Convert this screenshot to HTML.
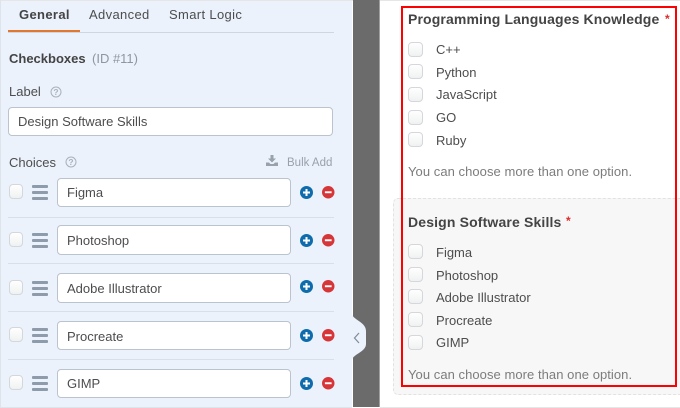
<!DOCTYPE html>
<html><head><meta charset="utf-8">
<style>
html,body{margin:0;padding:0}
body{width:680px;height:408px;position:relative;overflow:hidden;background:#fff;font-family:"Liberation Sans",sans-serif;color:#4a4a4a}
div,span{position:absolute;box-sizing:border-box;white-space:nowrap}
.t{font-size:13px;line-height:16px;color:#4d4d4d}
.b{font-weight:bold;color:#444}
.tab{letter-spacing:.35px}
.inp{background:#fff;border:1px solid #bcc3cd;border-radius:4px;font-size:13px;color:#4d4d4d;padding-left:9px}
.cb{width:14px;height:15px;background:linear-gradient(#fff,#f0f1f2);border:1px solid #d4d7db;border-radius:4px}
.r{left:408px;width:15px}
.sep{left:8px;width:326px;height:1px;background:#d8dfe8}
.h{left:32px;width:16px;height:3px;background:#8e9bab;border-radius:1px}
.hd{font-size:14px;line-height:18px}
.n{color:#7c7c7c;letter-spacing:.055px}
svg{position:absolute}
</style></head><body>
<div style="left:0;top:0;width:352px;height:408px;background:#ebf2fc"></div>
<div style="left:0;top:0;width:680px;height:1px;background:#e6e6e6"></div>
<div style="left:0;top:407px;width:352px;height:1px;background:#dfe4ea"></div>
<div style="left:0;top:0;width:1px;height:408px;background:#dfe4ea"></div>

<div class="t b tab" style="left:19px;top:7px">General</div>
<div class="t tab" style="left:89px;top:7px">Advanced</div>
<div class="t tab" style="left:169px;top:7px">Smart Logic</div>
<div style="left:8px;top:32px;width:326px;height:1px;background:#d0d6de"></div>
<div style="left:8px;top:30px;width:72px;height:2px;background:#e27730"></div>

<div class="t b" style="left:9px;top:51px">Checkboxes</div>
<div class="t" style="left:92px;top:51px;color:#8f96a0">(ID #11)</div>

<div class="t" style="left:9px;top:84px">Label</div>
<svg style="left:50px;top:86px" width="12" height="12" viewBox="0 0 12 12"><circle cx="6" cy="6" r="5" fill="none" stroke="#a9b1bb" stroke-width="1"/><text x="6" y="9" text-anchor="middle" font-size="8.500" font-weight="bold" fill="#a9b1bb" font-family="Liberation Sans">?</text></svg>
<div class="inp" style="left:8px;top:107px;width:325px;height:29px;line-height:28px">Design Software Skills</div>

<div class="t" style="left:9px;top:155px">Choices</div>
<svg style="left:65px;top:156px" width="12" height="12" viewBox="0 0 12 12"><circle cx="6" cy="6" r="5" fill="none" stroke="#a9b1bb" stroke-width="1"/><text x="6" y="9" text-anchor="middle" font-size="8.500" font-weight="bold" fill="#a9b1bb" font-family="Liberation Sans">?</text></svg>
<svg style="left:266px;top:155px" width="12" height="11" viewBox="0 0 12 11"><path d="M4.500 0h3v3.500h2.500L6 7.500 2 3.500h2.500zM0 7.500h3l1.500 1.500h3L9 7.500h3V11H0z" fill="#98a1ac"/></svg>
<div class="t" style="left:287px;top:155px;font-size:11.500px;color:#9aa1ab">Bulk Add</div>

<div class="sep" style="top:217px"></div>
<div class="sep" style="top:263px"></div>
<div class="sep" style="top:311px"></div>
<div class="sep" style="top:359px"></div>

<!-- rows -->
<div class="cb" style="left:9px;top:184px"></div>
<div class="h" style="top:185px"></div><div class="h" style="top:191px"></div><div class="h" style="top:197px"></div>
<div class="inp" style="left:57px;top:178px;width:234px;height:29px;line-height:28px">Figma</div>
<svg style="left:300px;top:186px" width="13" height="13" viewBox="0 0 13 13"><circle cx="6.500" cy="6.500" r="6.500" fill="#0e6cad"/><path d="M3 5.500h2.500V3h2v2.500H10v2H7.500V10h-2V7.500H3z" fill="#fff"/></svg>
<svg style="left:322px;top:186px" width="12.500" height="12.500" viewBox="0 0 13 13"><circle cx="6.500" cy="6.500" r="6.500" fill="#d63638"/><path d="M3 5.500h7v2H3z" fill="#fff"/></svg>

<div class="cb" style="left:9px;top:232px"></div>
<div class="h" style="top:233px"></div><div class="h" style="top:239px"></div><div class="h" style="top:245px"></div>
<div class="inp" style="left:57px;top:225px;width:234px;height:30px;line-height:29px">Photoshop</div>
<svg style="left:300px;top:234px" width="13" height="13" viewBox="0 0 13 13"><circle cx="6.500" cy="6.500" r="6.500" fill="#0e6cad"/><path d="M3 5.500h2.500V3h2v2.500H10v2H7.500V10h-2V7.500H3z" fill="#fff"/></svg>
<svg style="left:322px;top:234px" width="12.500" height="12.500" viewBox="0 0 13 13"><circle cx="6.500" cy="6.500" r="6.500" fill="#d63638"/><path d="M3 5.500h7v2H3z" fill="#fff"/></svg>

<div class="cb" style="left:9px;top:280px"></div>
<div class="h" style="top:281px"></div><div class="h" style="top:287px"></div><div class="h" style="top:293px"></div>
<div class="inp" style="left:57px;top:273px;width:234px;height:30px;line-height:29px">Adobe Illustrator</div>
<svg style="left:300px;top:280px" width="13" height="13" viewBox="0 0 13 13"><circle cx="6.500" cy="6.500" r="6.500" fill="#0e6cad"/><path d="M3 5.500h2.500V3h2v2.500H10v2H7.500V10h-2V7.500H3z" fill="#fff"/></svg>
<svg style="left:322px;top:280px" width="12.500" height="12.500" viewBox="0 0 13 13"><circle cx="6.500" cy="6.500" r="6.500" fill="#d63638"/><path d="M3 5.500h7v2H3z" fill="#fff"/></svg>

<div class="cb" style="left:9px;top:327px"></div>
<div class="h" style="top:328px"></div><div class="h" style="top:334px"></div><div class="h" style="top:340px"></div>
<div class="inp" style="left:57px;top:321px;width:234px;height:29px;line-height:29px">Procreate</div>
<svg style="left:300px;top:329px" width="13" height="13" viewBox="0 0 13 13"><circle cx="6.500" cy="6.500" r="6.500" fill="#0e6cad"/><path d="M3 5.500h2.500V3h2v2.500H10v2H7.500V10h-2V7.500H3z" fill="#fff"/></svg>
<svg style="left:322px;top:329px" width="12.500" height="12.500" viewBox="0 0 13 13"><circle cx="6.500" cy="6.500" r="6.500" fill="#d63638"/><path d="M3 5.500h7v2H3z" fill="#fff"/></svg>

<div class="cb" style="left:9px;top:375px"></div>
<div class="h" style="top:376px"></div><div class="h" style="top:382px"></div><div class="h" style="top:388px"></div>
<div class="inp" style="left:57px;top:369px;width:234px;height:29px;line-height:28px">GIMP</div>
<svg style="left:300px;top:377px" width="13" height="13" viewBox="0 0 13 13"><circle cx="6.500" cy="6.500" r="6.500" fill="#0e6cad"/><path d="M3 5.500h2.500V3h2v2.500H10v2H7.500V10h-2V7.500H3z" fill="#fff"/></svg>
<svg style="left:322px;top:377px" width="12.500" height="12.500" viewBox="0 0 13 13"><circle cx="6.500" cy="6.500" r="6.500" fill="#d63638"/><path d="M3 5.500h7v2H3z" fill="#fff"/></svg>

<!-- divider -->
<div style="left:353px;top:0;width:27px;height:407px;background:#6b6b6b;border-right:1px solid #a0a0a0"></div>
<svg style="left:352px;top:314px" width="15" height="46" viewBox="0 0 15 46"><path d="M0 0C1 6 14 8 14 17V30C14 38 1 40 0 46z" fill="#ebf2fc"/><path d="M7 19L2.500 24L7 29" fill="none" stroke="#7f8b99" stroke-width="1.200"/></svg>

<!-- right -->
<div style="left:380px;top:0;width:300px;height:1px;background:#e6e6e6"></div>
<div style="left:380px;top:407px;width:300px;height:1px;background:#e6e6e6"></div>
<div style="left:393px;top:198px;width:295px;height:197px;background:#f7f7f7;border:1px dashed #e2e2e2;border-radius:5px"></div>

<div class="t b hd" style="left:408px;top:10px;letter-spacing:.13px">Programming Languages Knowledge</div>
<div class="t b" style="left:665px;top:11px;color:#e02b2b;font-size:12px">*</div>
<div class="cb r" style="top:42px"></div><div class="t" style="left:436px;top:42px">C++</div>
<div class="cb r" style="top:64px"></div><div class="t" style="left:436px;top:65px">Python</div>
<div class="cb r" style="top:87px"></div><div class="t" style="left:436px;top:87px">JavaScript</div>
<div class="cb r" style="top:110px"></div><div class="t" style="left:436px;top:110px">GO</div>
<div class="cb r" style="top:132px"></div><div class="t" style="left:436px;top:133px">Ruby</div>
<div class="t n" style="left:408px;top:164px">You can choose more than one option.</div>

<div class="t b hd" style="left:408px;top:213px;letter-spacing:.15px">Design Software Skills</div>
<div class="t b" style="left:566px;top:213px;color:#e02b2b;font-size:12px">*</div>
<div class="cb r" style="top:244px"></div><div class="t" style="left:436px;top:245px">Figma</div>
<div class="cb r" style="top:267px"></div><div class="t" style="left:436px;top:268px">Photoshop</div>
<div class="cb r" style="top:289px"></div><div class="t" style="left:436px;top:290px">Adobe Illustrator</div>
<div class="cb r" style="top:312px"></div><div class="t" style="left:436px;top:313px">Procreate</div>
<div class="cb r" style="top:335px"></div><div class="t" style="left:436px;top:335px">GIMP</div>
<div class="t n" style="left:408px;top:367px">You can choose more than one option.</div>

<div style="left:401px;top:6px;width:276px;height:381px;border:2px solid #f00"></div>
</body></html>
